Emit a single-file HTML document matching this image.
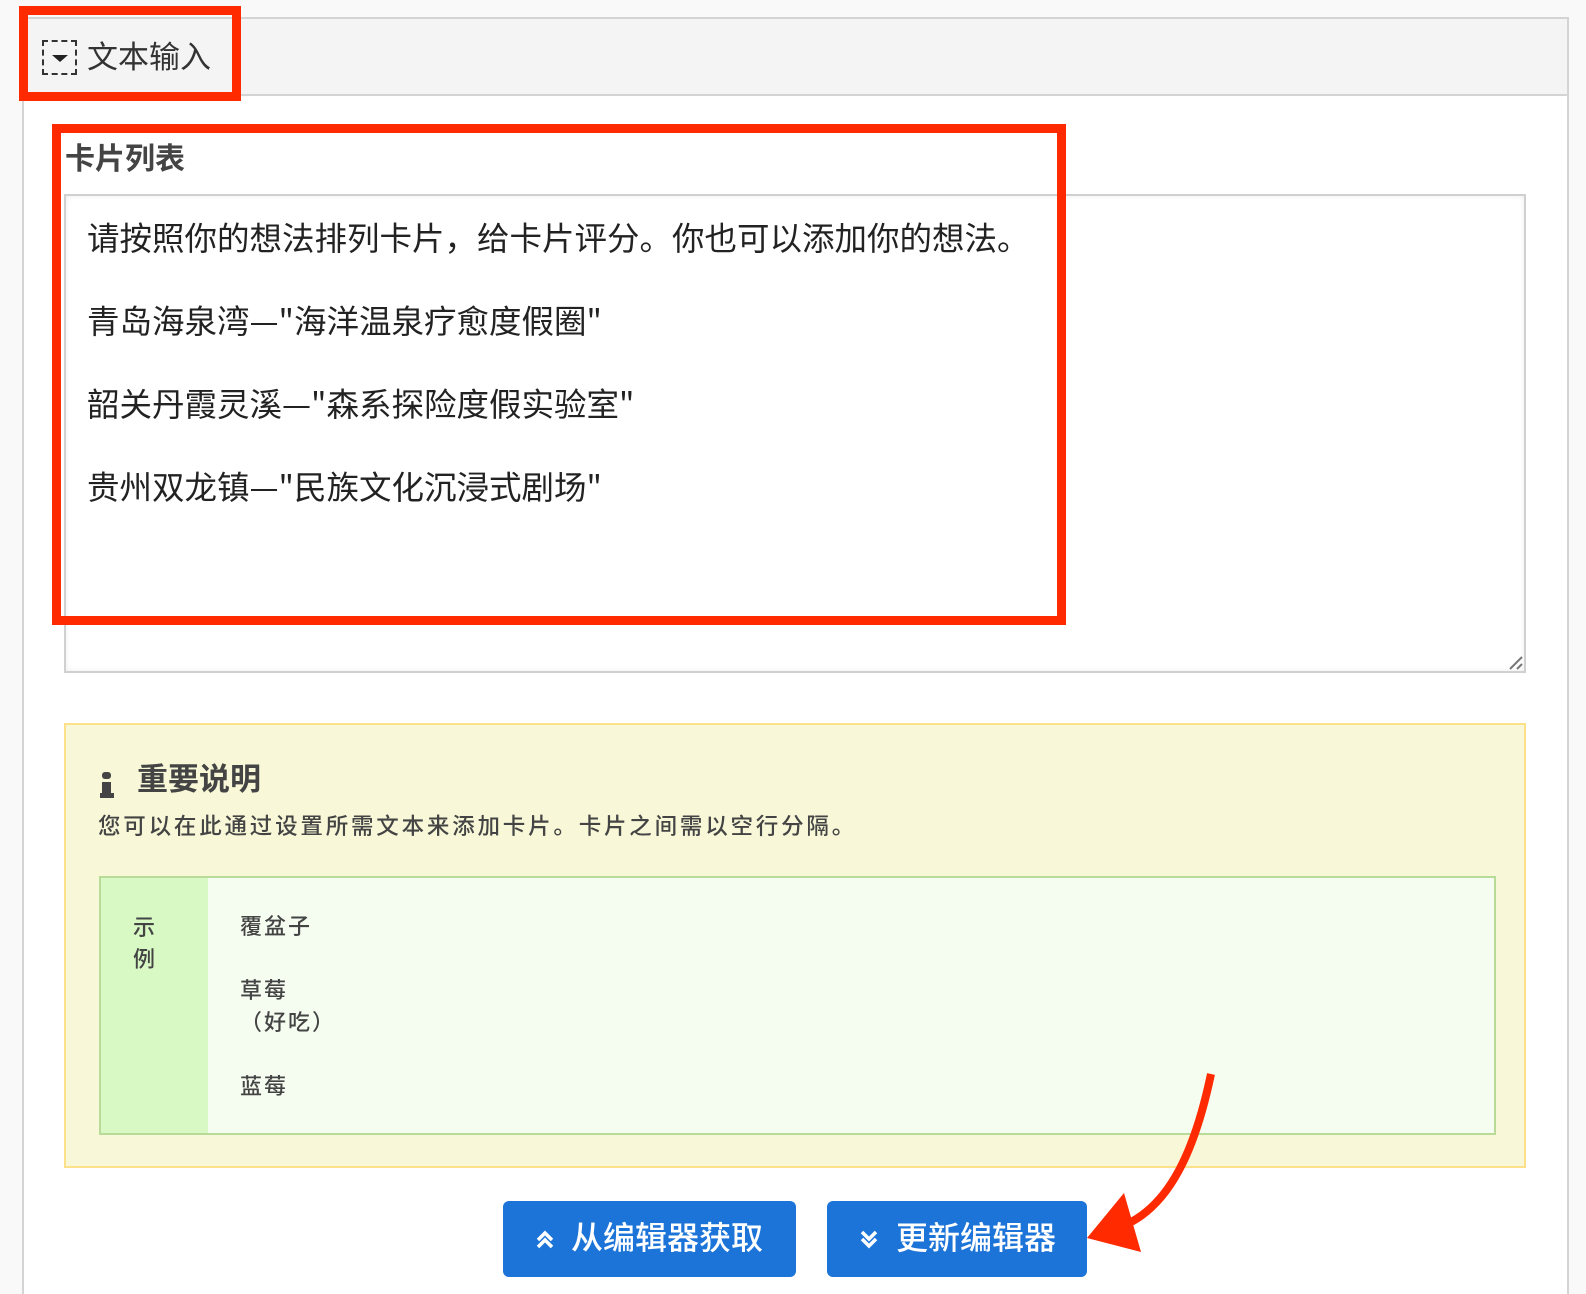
<!DOCTYPE html>
<html><head><meta charset="utf-8"><style>
*{box-sizing:border-box;margin:0;padding:0}
html,body{width:1586px;height:1294px;overflow:hidden}
body{background:#f9f9f9;font-family:"Liberation Sans","Noto Sans CJK SC",sans-serif;position:relative;color:#333}
.abs{position:absolute}
.panel{left:22px;top:17px;width:1547px;height:1281px;background:#fff;border:2px solid #d4d4d4}
.hdr{left:24px;top:19px;width:1543px;height:77px;background:#f4f4f4;border-bottom:2px solid #d4d4d4}
.t{white-space:nowrap}
.red{border:9px solid #ff2a00}
.m{font-weight:500}
</style></head><body>
<div class="abs panel"></div>
<div class="abs hdr"></div>
<div class="abs" style="left:42px;top:40px;width:35px;height:35px;border:2px dashed #333"></div>
<div class="abs" style="left:52px;top:55px;width:0;height:0;border-left:8px solid transparent;border-right:8px solid transparent;border-top:7px solid #222"></div>
<div class="abs t" style="left:87px;top:37px;font-size:31px;line-height:42px;color:#333">文本输入</div>

<div class="abs t" style="left:65px;top:139px;font-size:30px;line-height:42px;font-weight:bold;color:#444">卡片列表</div>
<div class="abs" style="left:64px;top:194px;width:1462px;height:479px;border:2px solid #d0d0d0;background:#fff;box-shadow:inset 0 0 6px rgba(0,0,0,0.08)"></div>
<svg class="abs" style="left:1508px;top:655px" width="16" height="16"><path d="M2 14L14 2M9 14L14 9" stroke="#777" stroke-width="2"/></svg>
<div class="abs" style="left:87px;top:216px;font-size:32.5px;line-height:41.5px;color:#222;font-family:'Noto Sans CJK SC',sans-serif">
<div class="t">请按照你的想法排列卡片，给卡片评分。你也可以添加你的想法。</div><div>&nbsp;</div>
<div class="t">青岛海泉湾—"海洋温泉疗愈度假圈"</div><div>&nbsp;</div>
<div class="t">韶关丹霞灵溪—"森系探险度假实验室"</div><div>&nbsp;</div>
<div class="t">贵州双龙镇—"民族文化沉浸式剧场"</div>
</div>

<div class="abs" style="left:64px;top:723px;width:1462px;height:445px;background:#f8f8d8;border:2px solid #fde08a"></div>
<div class="abs" style="left:102px;top:772px;width:9px;height:7px;background:#444;border-radius:3px"></div>
<div class="abs" style="left:102px;top:782px;width:9px;height:15px;background:#444"></div>
<div class="abs" style="left:100px;top:793px;width:14px;height:5px;background:#444"></div>
<div class="abs t" style="left:137px;top:759px;font-size:31px;line-height:42px;font-weight:bold;color:#444">重要说明</div>
<div class="abs t m" style="left:98px;top:812px;font-size:22.5px;line-height:30px;letter-spacing:2.8px;color:#444">您可以在此通过设置所需文本来添加卡片。卡片之间需以空行分隔。</div>
<div class="abs" style="left:99px;top:876px;width:1397px;height:259px;background:#f4fdf0;border:2px solid #b8dc98"></div>
<div class="abs" style="left:101px;top:878px;width:107px;height:255px;background:#d8f8c4"></div>
<div class="abs m" style="left:133px;top:912px;font-size:22px;line-height:32px;color:#444">示<br>例</div>
<div class="abs t m" style="left:240px;top:911px;font-size:22px;line-height:32px;letter-spacing:2px;color:#444">覆盆子<br>&nbsp;<br>草莓<br>（好吃）<br>&nbsp;<br>蓝莓</div>

<div class="abs" style="left:503px;top:1201px;width:293px;height:76px;background:#1c74d8;border-radius:6px"></div>
<div class="abs" style="left:827px;top:1201px;width:260px;height:76px;background:#1c74d8;border-radius:6px"></div>
<svg class="abs" style="left:535px;top:1230px" width="20" height="20"><path d="M3 10L10 3L17 10M3 17L10 10L17 17" stroke="#fff" stroke-width="3.5" fill="none"/></svg>
<svg class="abs" style="left:859px;top:1229px" width="20" height="20"><path d="M3 3L10 10L17 3M3 10L10 17L17 10" stroke="#fff" stroke-width="3.5" fill="none"/></svg>
<div class="abs t m" style="left:571px;top:1217px;font-size:32px;line-height:42px;color:#fff">从编辑器获取</div>
<div class="abs t m" style="left:896px;top:1217px;font-size:32px;line-height:42px;color:#fff">更新编辑器</div>

<div class="abs red" style="left:19px;top:6px;width:222px;height:95px"></div>
<div class="abs red" style="left:52px;top:124px;width:1014px;height:501px"></div>
<svg class="abs" style="left:0;top:0" width="1586" height="1294">
<path d="M1211 1074 C1195 1150 1170 1205 1125 1225" stroke="#ff2a00" stroke-width="8" fill="none"/>
<path d="M1087 1238 L1124 1193 L1141 1252 Z" fill="#ff2a00"/>
</svg>
</body></html>
